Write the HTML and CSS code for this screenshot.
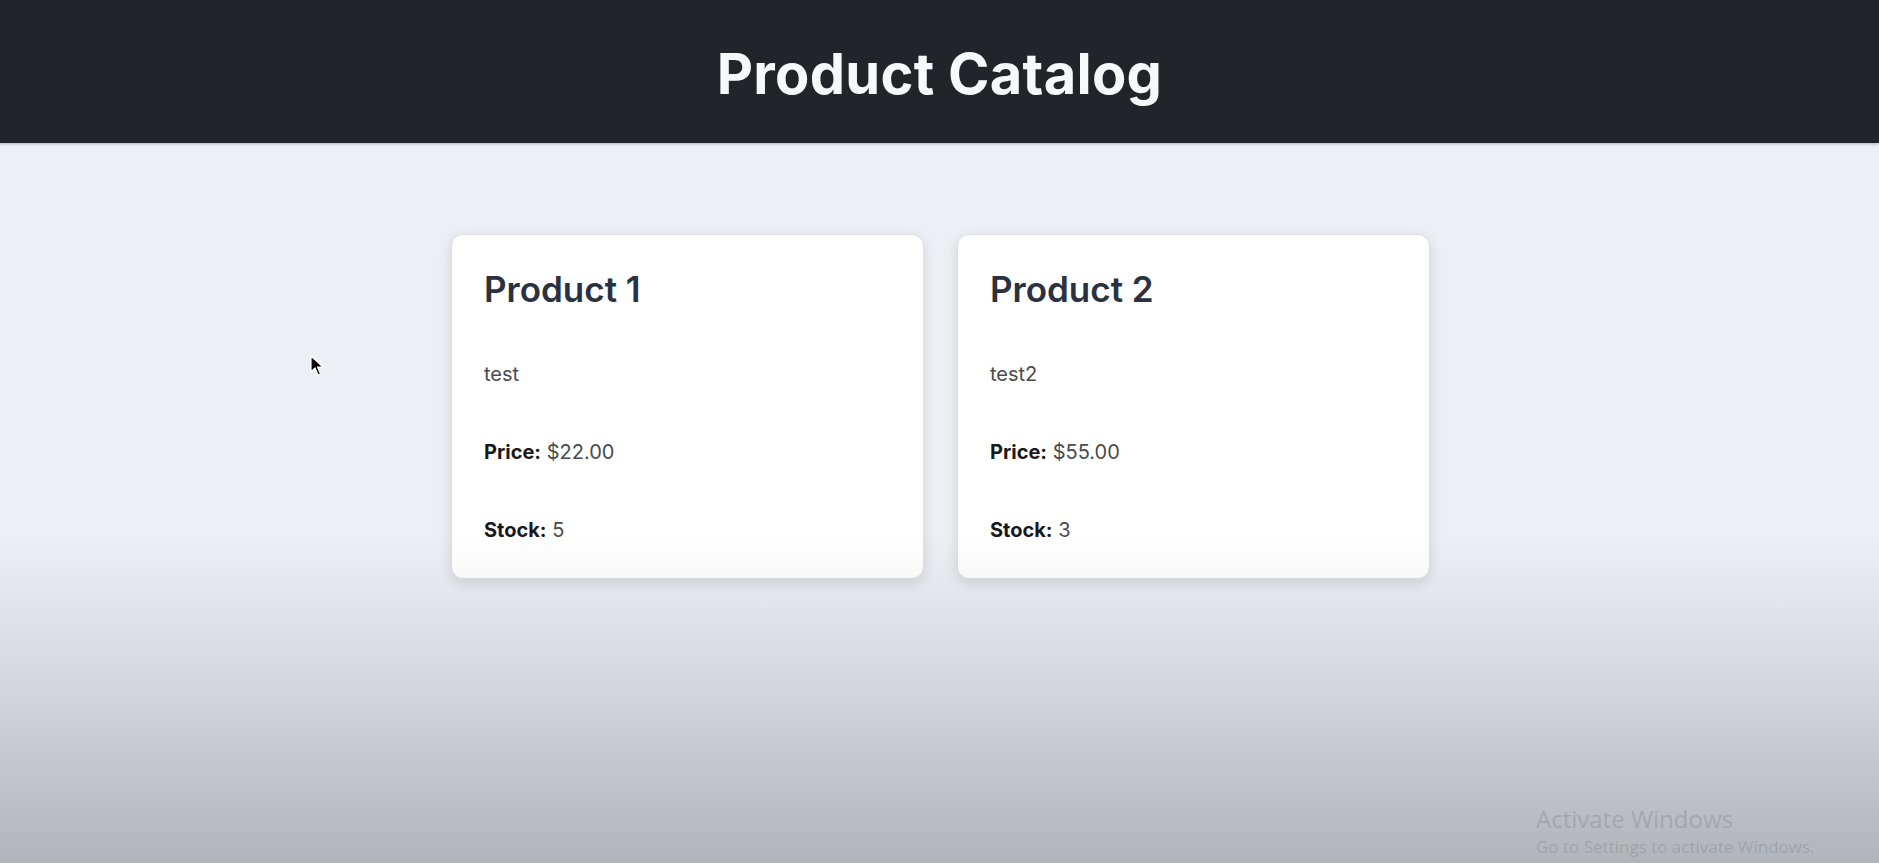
FILE: index.html
```html
<!DOCTYPE html>
<html lang="en">
<head>
<meta charset="utf-8">
<title>Product Catalog</title>
<link rel="stylesheet" href="styles.css">
</head>
<body>
<header class="topbar">
  <h1 class="topbar-title">Product Catalog</h1>
</header>
<main class="catalog">
  <article class="card">
    <h2 class="card-title">Product 1</h2>
    <p class="card-desc">test</p>
    <p class="card-row"><strong>Price:</strong> $22.00</p>
    <p class="card-row"><strong>Stock:</strong> 5</p>
  </article>
  <article class="card">
    <h2 class="card-title">Product 2</h2>
    <p class="card-desc">test2</p>
    <p class="card-row"><strong>Price:</strong> $55.00</p>
    <p class="card-row"><strong>Stock:</strong> 3</p>
  </article>
</main>
<div class="vignette"></div>
<svg class="cursor" width="14" height="22" viewBox="0 0 14 22">
  <path d="M1 1 L1 17 L5 13 L8 20 L10.5 19 L7.5 12 L13 12 Z" fill="#000" stroke="#fff" stroke-width="1.2" stroke-linejoin="round"/>
</svg>
<div class="watermark">
  <div class="wm-title">Activate Windows</div>
  <div class="wm-sub">Go to Settings to activate Windows.</div>
</div>
</body>
</html>
```

FILE: styles.css
```css
html, body {
  margin: 0;
  padding: 0;
  height: 100%;
}
body {
  background: #eceff3;
  font-family: Inter, "Noto Sans", sans-serif;
  overflow: hidden;
  position: relative;
}
.topbar {
  height: 143px;
  background: #222429;
  display: flex;
  justify-content: center;
  align-items: center;
  box-shadow: 0 1px 3px rgba(0, 0, 0, 0.25);
}
.topbar-title {
  margin: 0;
  padding-top: 4px;
  color: #f7f8fa;
  font-size: 56px;
  font-weight: 700;
  letter-spacing: 0.3px;
}
.catalog {
  display: flex;
  justify-content: center;
  gap: 33px;
  padding-top: 91px;
  padding-left: 2px;
}
.card {
  box-sizing: border-box;
  width: 473px;
  height: 345px;
  background: #ffffff;
  border: 1px solid #dcdfe3;
  border-radius: 12px;
  box-shadow: 0 4px 14px rgba(0, 0, 0, 0.12);
  display: flex;
  flex-direction: column;
  padding: 0 32px;
}
.card-title {
  margin: 33px 0 0;
  font-size: 35px;
  line-height: 42px;
  font-weight: 600;
  color: #2a3140;
}
.card-desc,
.card-row {
  margin: 0;
  font-size: 20px;
  line-height: 24px;
  color: #4a4a4c;
}
.card-desc {
  margin-top: 52px;
}
.card-row {
  margin-top: 54px;
}
.card-row strong {
  color: #18191b;
  font-weight: 700;
}
.vignette {
  position: absolute;
  left: 0;
  right: 0;
  top: 0;
  bottom: 0;
  pointer-events: none;
  background: linear-gradient(to bottom,
    rgba(40, 45, 55, 0) 0px,
    rgba(40, 45, 55, 0) 535px,
    rgba(40, 45, 55, 0.05) 600px,
    rgba(40, 45, 55, 0.14) 700px,
    rgba(40, 45, 55, 0.30) 863px);
}
.cursor {
  position: absolute;
  left: 310px;
  top: 355px;
}
.watermark {
  position: absolute;
  left: 1536px;
  top: 803px;
  color: rgba(120, 125, 130, 0.35);
  font-family: "Open Sans", "Noto Sans", sans-serif;
  white-space: nowrap;
}
.wm-title {
  font-size: 24px;
  line-height: 32px;
}
.wm-sub {
  font-size: 17px;
  line-height: 24px;
}
```
